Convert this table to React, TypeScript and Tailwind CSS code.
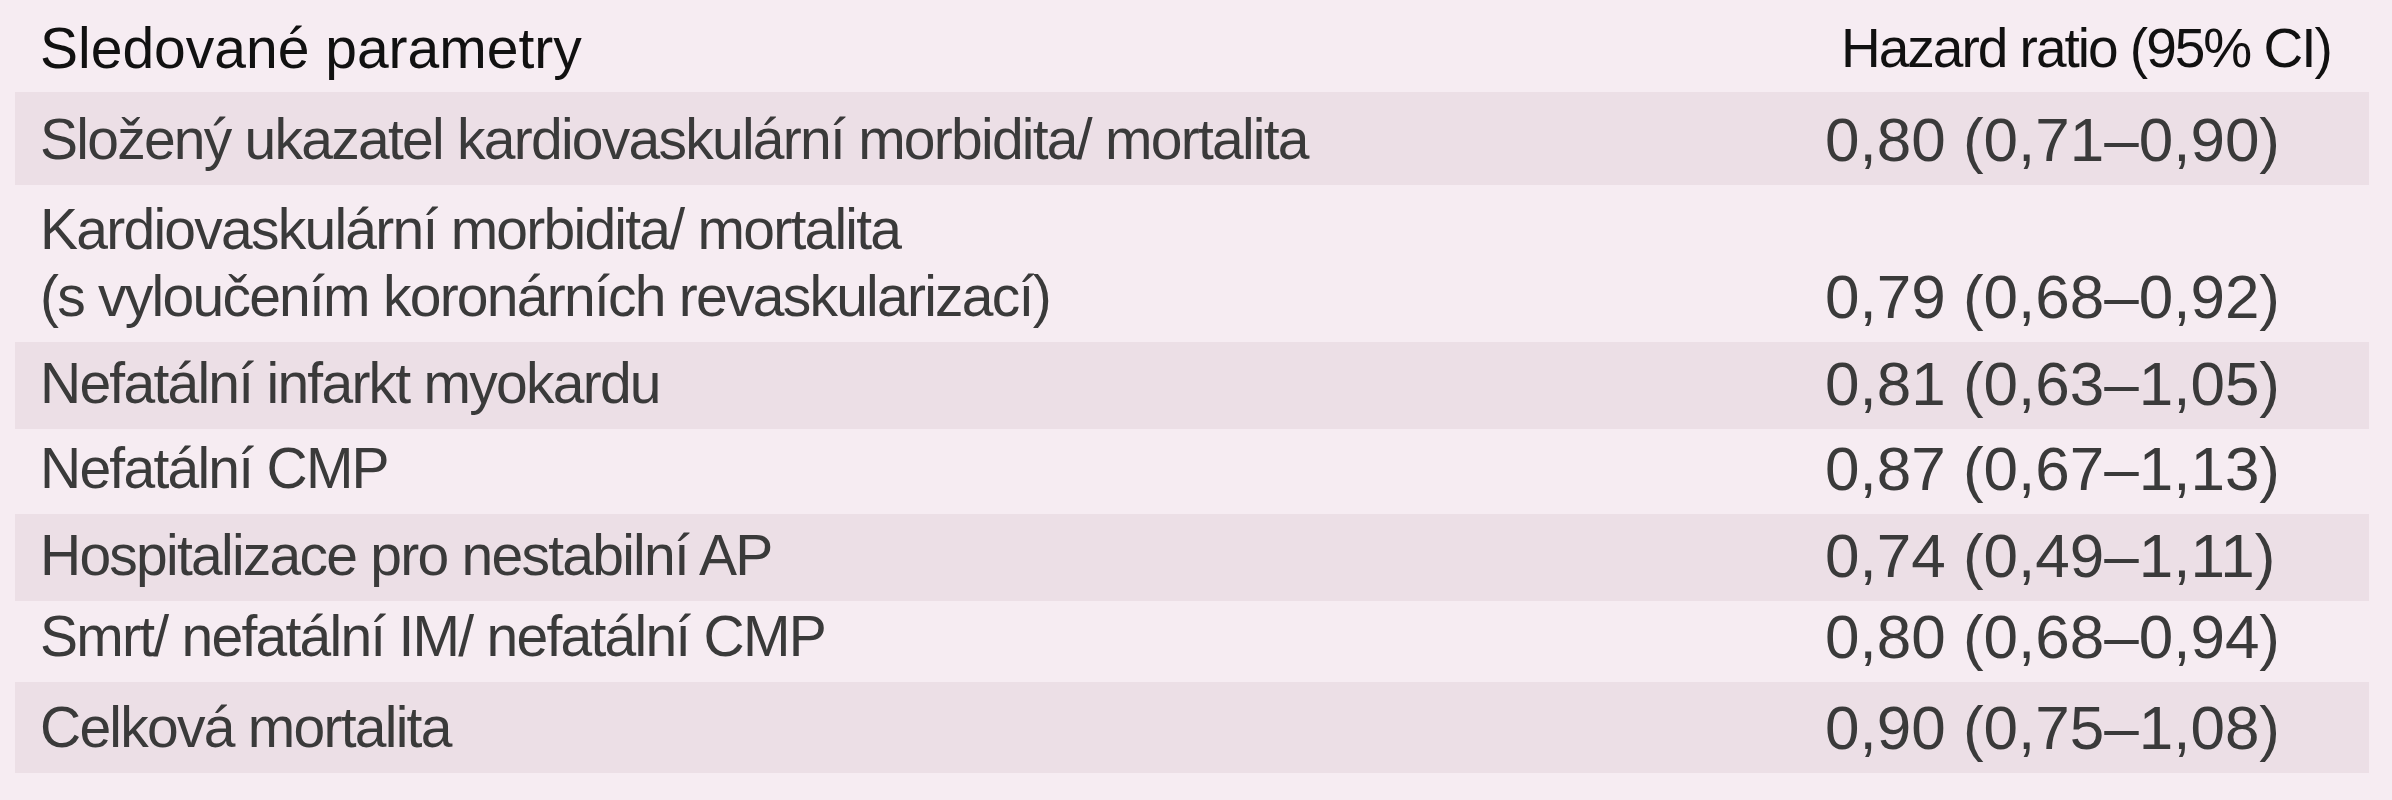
const rows = [
  { label: ['Složený ukazatel kardiovaskulární morbidita/ mortalita'], value: '0,80 (0,71–0,90)', h: 'h-[93px]', striped: true },
  {
    label: ['Kardiovaskulární morbidita/ mortalita', '(s vyloučením koronárních revaskularizací)'],
    value: '0,79 (0,68–0,92)',
    h: 'h-[157px]',
    striped: false,
  },
  { label: ['Nefatální infarkt myokardu'], value: '0,81 (0,63–1,05)', h: 'h-[87px]', striped: true },
  { label: ['Nefatální CMP'], value: '0,87 (0,67–1,13)', h: 'h-[85px]', striped: false },
  { label: ['Hospitalizace pro nestabilní AP'], value: '0,74 (0,49–1,11)', h: 'h-[87px]', striped: true },
  { label: ['Smrt/ nefatální IM/ nefatální CMP'], value: '0,80 (0,68–0,94)', h: 'h-[81px]', striped: false },
  { label: ['Celková mortalita'], value: '0,90 (0,75–1,08)', h: 'h-[91px]', striped: true },
]

export default function App() {
  return (
    <div
      className="w-[2392px] h-[800px] bg-[#f6ecf2] pl-[15px] pr-[23px] text-[#3a3a3a]"
      style={{ fontFamily: '"Liberation Sans", Arial, sans-serif' }}
    >
      {/* header */}
      <div className="flex h-[92px] items-end pb-[14px] text-[#111] leading-[60px]">
        <div className="flex-1 pl-[25px] text-[57px]">Sledované parametry</div>
        <div className="w-[544px] pl-[16px] text-[55px] tracking-[-2px]">Hazard ratio (95% CI)</div>
      </div>

      {rows.map((r, i) => (
        <div
          key={i}
          className={`flex items-end pb-[12px] leading-[67px] ${r.h} ${r.striped ? 'bg-[#ecdfe6]' : ''}`}
        >
          <div className="flex-1 pl-[25px] text-[57px] tracking-[-1.75px]">
            {r.label.map((l, j) => (
              <div key={j}>{l}</div>
            ))}
          </div>
          <div className="w-[544px] text-[62px]">{r.value}</div>
        </div>
      ))}
    </div>
  )
}
